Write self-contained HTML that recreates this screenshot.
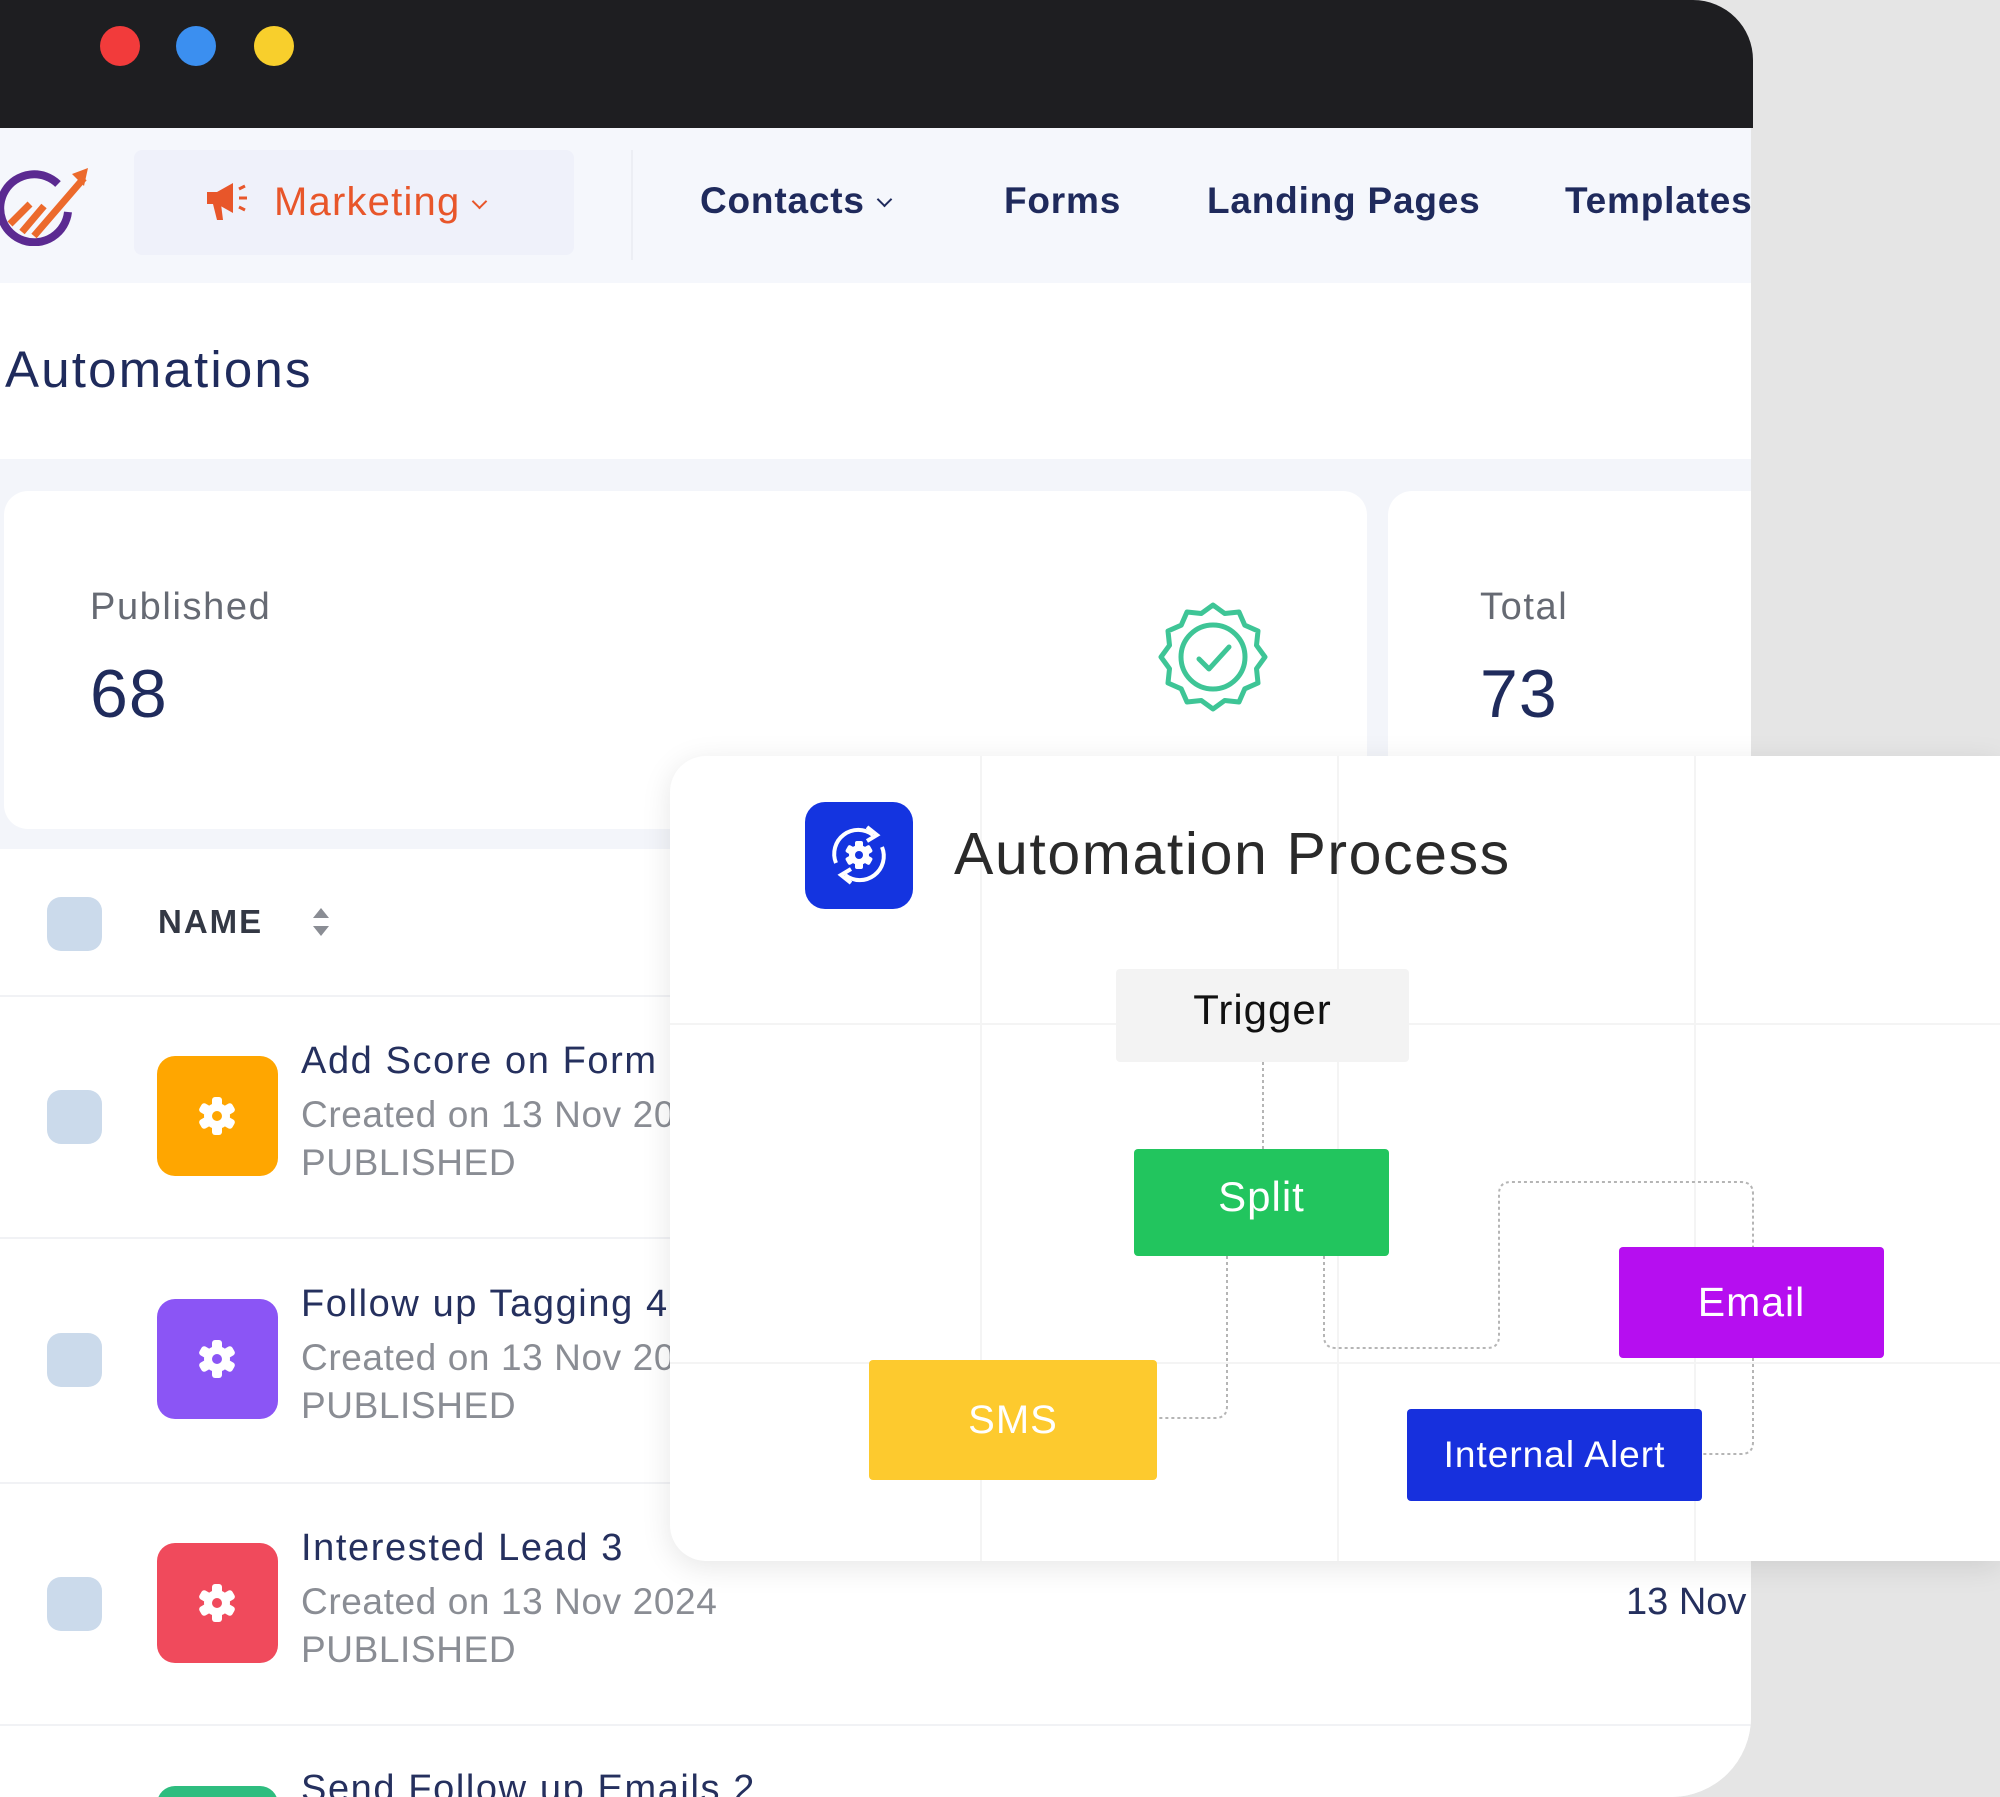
<!DOCTYPE html>
<html><head><meta charset="utf-8">
<style>
*{box-sizing:border-box;margin:0;padding:0}
html{width:2000px;height:1797px;overflow:hidden}
body{width:2000px;height:1797px;overflow:hidden;background:#e5e5e5;font-family:"Liberation Sans",sans-serif;position:relative}
.abs{position:absolute}
.win{left:0;top:0;width:1751px;height:1797px;background:#fff;border-radius:0 60px 80px 0;overflow:hidden}
.top{left:0;top:0;width:1753px;height:128px;background:#1e1e21;border-top-right-radius:60px}
.dot{width:40px;height:40px;border-radius:50%;top:26px}
.nav{left:0;top:128px;width:1751px;height:155px;background:#f5f7fc}
.navt{font-size:37px;font-weight:bold;color:#1f2a5c;top:180px;white-space:nowrap;letter-spacing:0.8px}
.chev{display:inline-block;width:12px;height:12px;border-right:2.5px solid currentColor;border-bottom:2.5px solid currentColor;transform:rotate(45deg);margin-left:14px;position:relative;top:-8px}
.card{background:#fff;border-radius:24px}
.row-line{left:0;width:1751px;height:2px;background:#f1f2f5}
.cb{width:55px;height:54px;border-radius:14px;background:#cbdaeb;left:47px}
.ic{width:121px;height:120px;border-radius:18px;left:157px}
.ic svg{position:absolute;left:40px;top:40px}
.t1{left:301px;font-size:38px;color:#25305e;white-space:nowrap;letter-spacing:1.6px}
.t2{left:301px;font-size:37px;color:#8a8d94;white-space:nowrap;letter-spacing:0.6px}
.node{display:flex;align-items:center;justify-content:center;color:#fff;font-size:40px;border-radius:4px;letter-spacing:1px}
</style></head><body>
<div class="abs win">
 <div class="abs nav"></div>
 <svg class="abs" style="left:0;top:162px" width="92" height="84" viewBox="0 0 92 84">
  <path d="M58 22 A34 34 0 1 0 68 50" fill="none" stroke="#5b2a91" stroke-width="8"/>
  <path d="M10 62 L30 42 M22 70 L44 44 M34 74 L84 16" stroke="#ec6a2c" stroke-width="7" fill="none"/>
  <path d="M72 12 L88 6 L84 24 Z" fill="#ec6a2c"/>
 </svg>
 <div class="abs" style="left:134px;top:150px;width:440px;height:105px;background:#eff1fa;border-radius:8px"></div>
 <svg class="abs" style="left:203px;top:180px" width="46" height="46" viewBox="0 0 46 46">
  <path d="M4 12 H14 L30 3 V33 L14 24 H4 Z" fill="#e8562a"/><path d="M10 24 L14 40 H20 L18 24 Z" fill="#e8562a"/>
  <path d="M36 9 L42 6 M36 18 H44 M36 27 L42 30" stroke="#e8562a" stroke-width="3"/>
 </svg>
 <div class="abs" style="left:274px;top:180px;font-size:40px;color:#e8562a;white-space:nowrap;letter-spacing:1.2px">Marketing<span class="chev" style="width:11px;height:11px;border-width:2px"></span></div>
 <div class="abs" style="left:631px;top:150px;width:2px;height:110px;background:#eceef4"></div>
 <div class="abs navt" style="left:700px">Contacts<span class="chev" style="width:11px;height:11px;border-width:2px"></span></div>
 <div class="abs navt" style="left:1004px">Forms</div>
 <div class="abs navt" style="left:1207px">Landing Pages</div>
 <div class="abs navt" style="left:1565px">Templates</div>

 <div class="abs" style="left:5px;top:340px;font-size:51px;color:#1f2b5c;letter-spacing:2.2px">Automations</div>
 <div class="abs" style="left:0;top:459px;width:1751px;height:390px;background:#f3f5fa"></div>
 <div class="abs card" style="left:4px;top:491px;width:1363px;height:338px"></div>
 <div class="abs card" style="left:1388px;top:491px;width:400px;height:338px"></div>
 <div class="abs" style="left:90px;top:586px;font-size:38px;color:#666a73;letter-spacing:1.6px">Published</div>
 <div class="abs" style="left:90px;top:655px;font-size:68px;color:#1f2b5c;letter-spacing:1px">68</div>
 <div class="abs" style="left:1480px;top:586px;font-size:38px;color:#666a73;letter-spacing:1.6px">Total</div>
 <div class="abs" style="left:1480px;top:655px;font-size:68px;color:#1f2b5c;letter-spacing:1px">73</div>
 <svg class="abs" style="left:1153px;top:597px" width="120" height="120" viewBox="-60 -60 120 120">
  <polygon points="52,0 43.5,11.7 45,26 31.8,31.8 26,45 11.7,43.5 0,52 -11.7,43.5 -26,45 -31.8,31.8 -45,26 -43.5,11.7 -52,0 -43.5,-11.7 -45,-26 -31.8,-31.8 -26,-45 -11.7,-43.5 0,-52 11.7,-43.5 26,-45 31.8,-31.8 45,-26 43.5,-11.7" fill="none" stroke="#3ec596" stroke-width="5" stroke-linejoin="round"/>
  <circle r="32" fill="none" stroke="#3ec596" stroke-width="5"/>
  <path d="M-14 2 L-4 12 L16 -10" fill="none" stroke="#3ec596" stroke-width="5" stroke-linecap="round" stroke-linejoin="round"/>
 </svg>

 <div class="abs" style="left:0;top:849px;width:1751px;height:948px;background:#fff"></div>
 <div class="abs cb" style="top:897px"></div>
 <div class="abs" style="left:158px;top:903px;font-size:33px;font-weight:bold;color:#333844;letter-spacing:2px">NAME</div>
 <svg class="abs" style="left:310px;top:904px" width="22" height="36" viewBox="0 0 22 36"><path d="M11 4 L19 14 H3 Z M11 32 L19 22 H3 Z" fill="#8a8d94"/></svg>
 <div class="abs row-line" style="top:995px"></div>
 <div class="abs row-line" style="top:1237px"></div>
 <div class="abs row-line" style="top:1482px"></div>
 <div class="abs row-line" style="top:1724px"></div>

 <div class="abs cb" style="top:1090px"></div>
 <div class="abs ic" style="top:1056px;background:#ffa600"><svg width="40" height="40" viewBox="-20 -20 40 40"><g fill="#fff"><circle r="13"/><rect x="-5" y="-19" width="10" height="38" rx="3"/><rect x="-5" y="-19" width="10" height="38" rx="3" transform="rotate(60)"/><rect x="-5" y="-19" width="10" height="38" rx="3" transform="rotate(120)"/></g><circle r="5" fill="#ffa600"/></svg></div>
 <div class="abs t1" style="top:1040px">Add Score on Form</div>
 <div class="abs t2" style="top:1094px">Created on 13 Nov 2024</div>
 <div class="abs t2" style="top:1142px">PUBLISHED</div>

 <div class="abs cb" style="top:1333px"></div>
 <div class="abs ic" style="top:1299px;background:#8b55f5"><svg width="40" height="40" viewBox="-20 -20 40 40"><g fill="#fff"><circle r="13"/><rect x="-5" y="-19" width="10" height="38" rx="3"/><rect x="-5" y="-19" width="10" height="38" rx="3" transform="rotate(60)"/><rect x="-5" y="-19" width="10" height="38" rx="3" transform="rotate(120)"/></g><circle r="5" fill="#8b55f5"/></svg></div>
 <div class="abs t1" style="top:1283px">Follow up Tagging 4</div>
 <div class="abs t2" style="top:1337px">Created on 13 Nov 2024</div>
 <div class="abs t2" style="top:1385px">PUBLISHED</div>

 <div class="abs cb" style="top:1577px"></div>
 <div class="abs ic" style="top:1543px;background:#f04a5c"><svg width="40" height="40" viewBox="-20 -20 40 40"><g fill="#fff"><circle r="13"/><rect x="-5" y="-19" width="10" height="38" rx="3"/><rect x="-5" y="-19" width="10" height="38" rx="3" transform="rotate(60)"/><rect x="-5" y="-19" width="10" height="38" rx="3" transform="rotate(120)"/></g><circle r="5" fill="#f04a5c"/></svg></div>
 <div class="abs t1" style="top:1527px">Interested Lead 3</div>
 <div class="abs t2" style="top:1581px">Created on 13 Nov 2024</div>
 <div class="abs t2" style="top:1629px">PUBLISHED</div>
 <div class="abs" style="left:1626px;top:1581px;font-size:38px;color:#25305e;white-space:nowrap">13 Nov</div>

 <div class="abs ic" style="top:1786px;background:#2ebd7f"></div>
 <div class="abs t1" style="top:1768px">Send Follow up Emails 2</div>
</div>
<div class="abs top"></div>
<div class="abs dot" style="left:100px;background:#f23b3b"></div>
<div class="abs dot" style="left:176px;background:#3b8ff0"></div>
<div class="abs dot" style="left:254px;background:#f8cf2c"></div>

<div class="abs" style="left:670px;top:756px;width:1330px;height:805px;background:#fff;border-radius:36px 0 0 36px;box-shadow:0 6px 30px rgba(0,0,0,0.10);overflow:hidden">
 <div class="abs" style="left:310px;top:0;width:2px;height:805px;background:#f4f4f4"></div>
 <div class="abs" style="left:667px;top:0;width:2px;height:805px;background:#f4f4f4"></div>
 <div class="abs" style="left:1024px;top:0;width:2px;height:805px;background:#f4f4f4"></div>
 <div class="abs" style="left:0;top:267px;width:1330px;height:2px;background:#f4f4f4"></div>
 <div class="abs" style="left:0;top:606px;width:1330px;height:2px;background:#f4f4f4"></div>
</div>
<div class="abs" style="left:805px;top:802px;width:108px;height:107px;background:#1434e0;border-radius:20px">
 <svg class="abs" style="left:19px;top:18px" width="70" height="70" viewBox="-35 -35 70 70">
  <path d="M-23 8 A24 24 0 0 1 14 -20" fill="none" stroke="#fff" stroke-width="4"/>
  <path d="M8 -28 L18 -20 L8 -14" fill="none" stroke="#fff" stroke-width="4"/>
  <path d="M23 -8 A24 24 0 0 1 -14 20" fill="none" stroke="#fff" stroke-width="4"/>
  <path d="M-8 28 L-18 20 L-8 14" fill="none" stroke="#fff" stroke-width="4"/>
  <g fill="#fff"><circle r="10"/><rect x="-4" y="-14" width="8" height="28" rx="2"/><rect x="-4" y="-14" width="8" height="28" rx="2" transform="rotate(60)"/><rect x="-4" y="-14" width="8" height="28" rx="2" transform="rotate(120)"/></g>
  <circle r="4" fill="#1434e0"/>
 </svg>
</div>
<div class="abs" style="left:954px;top:820px;font-size:59px;color:#2a2a2a;white-space:nowrap;letter-spacing:1.6px">Automation Process</div>

<svg class="abs" style="left:0;top:0" width="2000" height="1797">
 <g fill="none" stroke="#b5b5b5" stroke-width="2" stroke-dasharray="3 3">
  <path d="M1263 1062 V1149"/>
  <path d="M1227 1256 V1406 Q1227 1418 1215 1418 H1157"/>
  <path d="M1324 1256 V1336 Q1324 1348 1336 1348 H1487 Q1499 1348 1499 1336 V1194 Q1499 1182 1511 1182 H1741 Q1753 1182 1753 1194 V1247"/>
  <path d="M1753 1358 V1442 Q1753 1454 1741 1454 H1702"/>
 </g>
</svg>
<div class="abs node" style="left:1116px;top:969px;width:293px;height:93px;background:#f3f3f3;color:#111;font-size:42px;padding-bottom:12px">Trigger</div>
<div class="abs node" style="left:1134px;top:1149px;width:255px;height:107px;background:#22c55e;font-size:42px;padding-bottom:12px">Split</div>
<div class="abs node" style="left:869px;top:1360px;width:288px;height:120px;background:#fdca2e">SMS</div>
<div class="abs node" style="left:1619px;top:1247px;width:265px;height:111px;background:#b60ef0;font-size:41px">Email</div>
<div class="abs node" style="left:1407px;top:1409px;width:295px;height:92px;background:#1730dd;font-size:37px">Internal Alert</div>
</body></html>
